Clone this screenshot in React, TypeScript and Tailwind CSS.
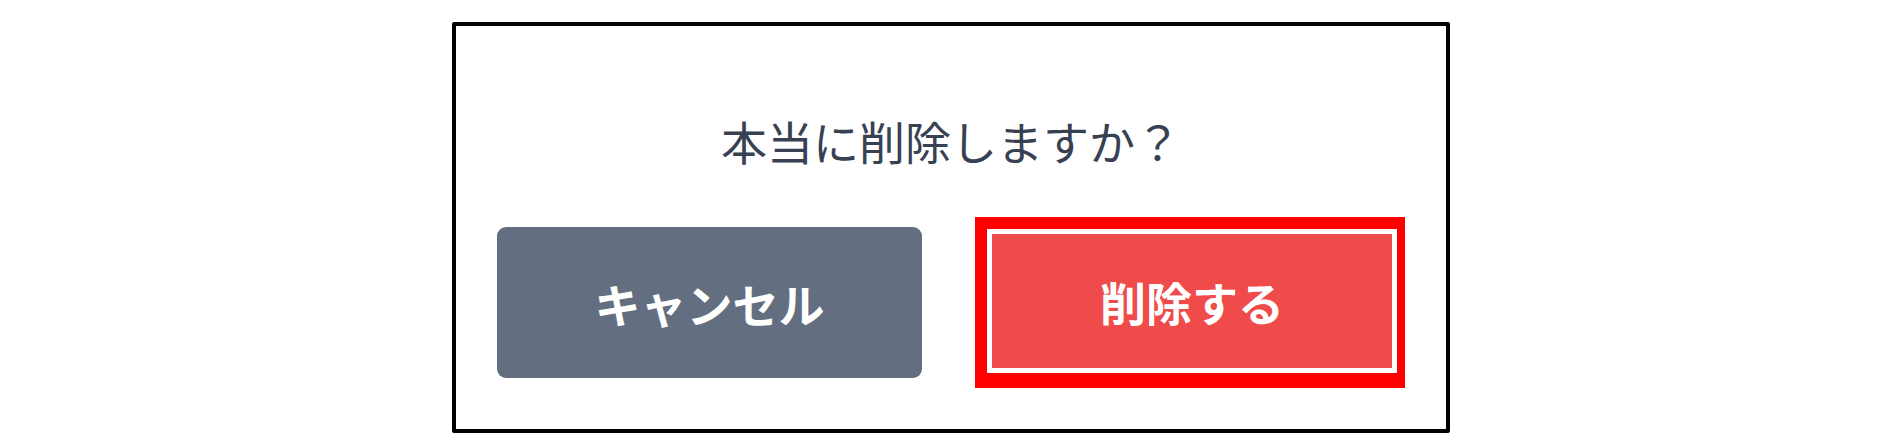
import React from 'react'

const jp = { fontFamily: '"Noto Sans CJK JP", "Noto Sans", sans-serif' }

const ConfirmDelete: React.FC = () => {
  return (
    <div className="w-[998px] mx-auto mt-[22px] border-[4px] border-black rounded-[2px] bg-white px-[41px] pb-[41px]">
      <p
        className="mt-[91px] text-center text-[46px] leading-none text-[#374151]"
        style={jp}
      >
        本当に削除しますか？
      </p>

      <div className="mt-[54px] flex items-start justify-between">
        <button
          className="mt-[10px] w-[425px] h-[151px] rounded-[9px] bg-[#636f80] text-white text-[46px] font-bold leading-none flex items-center justify-center"
          style={jp}
        >
          キャンセル
        </button>

        {/* highlighted delete button */}
        <div className="w-[430px] h-[171px] border-l-[12px] border-t-[12px] border-r-[8px] border-b-[15px] border-[#ff0000] bg-white p-[5px]">
          <button
            className="w-full h-full bg-[#f04b4b] text-white text-[46px] font-bold leading-none flex items-center justify-center"
            style={jp}
          >
            削除する
          </button>
        </div>
      </div>
    </div>
  )
}

export default function App() {
  return (
    <div className="w-[1902px] h-[433px] bg-white overflow-hidden">
      <ConfirmDelete />
    </div>
  )
}
